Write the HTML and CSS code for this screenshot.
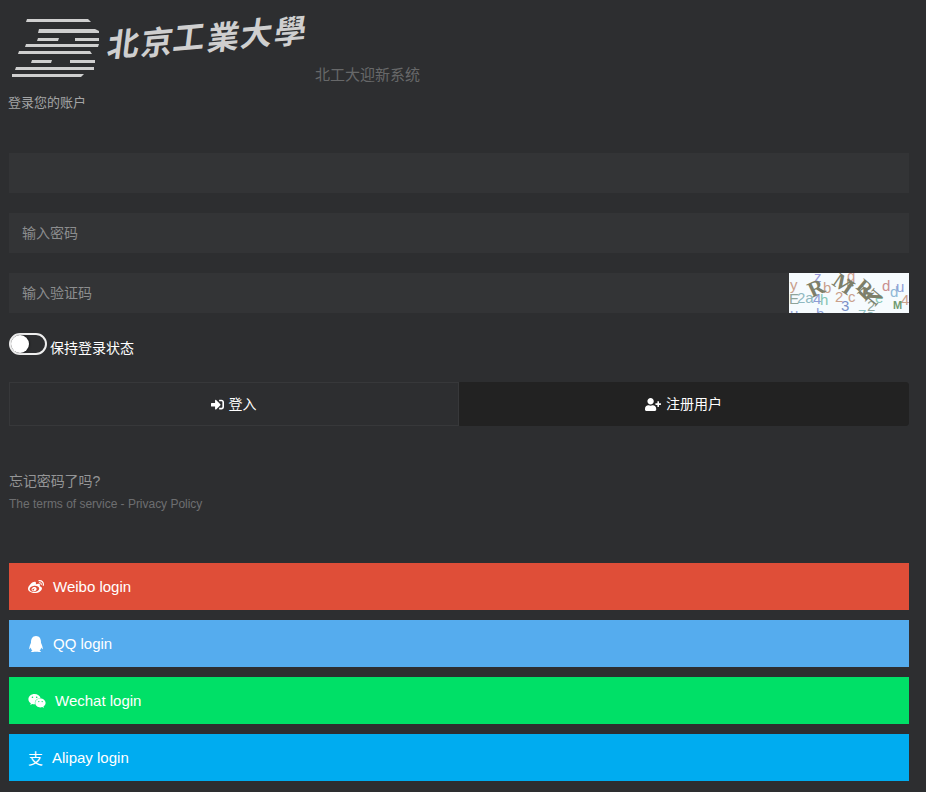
FILE: index.html
```html
<!DOCTYPE html>
<html lang="zh-CN">
<head>
<meta charset="utf-8">
<title>北工大迎新系统</title>
<link rel="stylesheet" href="styles.css">
</head>
<body>
<div class="wrap">
	<header class="top">
		<svg class="logo" viewBox="9 0 308 84" width="308" height="84">
			<g fill="#cfcfcf">
				<path d="M27 19h61l3 3H26z"/>
				<path d="M39 29h56l4 2v2H38z"/>
				<path d="M38 38h21l-1 3H37zM75 38h24v3H75z"/>
				<path d="M26 44h73l-1 3H25z"/>
				<path d="M19 51h71l2 3H18z"/>
				<path d="M32 60h20l-1 3H31zM70 60h25v3H70z"/>
				<path d="M16 67h78v3H15z"/>
				<path d="M12 74h72l-3 3H12z"/>
			</g>
			<g class="logo-text" transform="translate(5 -8) rotate(-5 207 40) skewX(-12)">
				<text x="111" y="56">北</text>
				<text x="145" y="57">京</text>
				<text x="177" y="55">工</text>
				<text x="212" y="58">業</text>
				<text x="245" y="57">大</text>
				<text x="279" y="58">學</text>
			</g>
		</svg>
		<span class="sys-name">北工大迎新系统</span>
	</header>
	<p class="hint">登录您的账户</p>

	<form class="login">
		<div class="field"><input type="text"></div>
		<div class="field"><input type="password" placeholder="输入密码"></div>
		<div class="field code">
			<input type="text" placeholder="输入验证码">
			<svg class="captcha" viewBox="0 0 120 40" width="120" height="40">
				<rect width="120" height="40" fill="#f6fbfe"/>
				<g font-family="Liberation Sans, sans-serif" font-size="15">
					<text x="1" y="17" fill="#c9a08c">y</text>
					<text x="0" y="31" fill="#8fa39a">E</text>
					<text x="8" y="30" fill="#8fb8c0">2a</text>
					<text x="24" y="31" fill="#8e9ed6">4</text>
					<text x="31" y="32" fill="#86c4b4">h</text>
					<text x="1" y="46" fill="#8e9ed6">u</text>
					<text x="27" y="46" fill="#8e9ed6">h</text>
					<text x="25" y="9" fill="#9a9ad8">z</text>
					<text x="58" y="8" fill="#cf9f90">q</text>
					<text x="34" y="20" fill="#c9a08c">b</text>
					<text x="46" y="29" fill="#c9a08c">2</text>
					<text x="52" y="38" fill="#7a90c8">3</text>
					<text x="59" y="29" fill="#c9a08c">c</text>
					<text x="86" y="30" fill="#86c4b4">e</text>
					<text x="78" y="38" fill="#8fa39a">2</text>
					<text x="93" y="18" fill="#c98f90">d</text>
					<text x="101" y="24" fill="#8fb8d6">d</text>
					<text x="107" y="19" fill="#8e9ed6">u</text>
					<text x="112" y="32" fill="#c9a08c">4</text>
					<text x="104" y="36" fill="#6f9a72" font-size="11" font-weight="bold">M</text>
					<text x="69" y="47" fill="#8fc0c0">7a</text>
				</g>
				<g font-family="Liberation Serif, serif" font-size="22" font-weight="bold" fill="#7d7f6a">
					<text transform="translate(23 25) rotate(-25)">R</text>
					<text transform="translate(42 11) rotate(35)">M</text>
					<text transform="translate(60 16) rotate(-35)" font-size="14">4</text>
					<text transform="translate(66 15) rotate(40)" font-size="20">R</text>
					<text transform="translate(76 29) rotate(-45)" font-size="18">R</text>
					<text transform="translate(86 34) rotate(-50)" font-size="20">N</text>
				</g>
			</svg>
		</div>

		<label class="keep">
			<span class="switch"><i></i></span>
			<span>保持登录状态</span>
		</label>

		<div class="btns">
			<button type="button" class="btn">
				<svg class="ico" viewBox="0 0 512 512"><path d="M416 448h-84c-6.6 0-12-5.4-12-12v-40c0-6.6 5.4-12 12-12h84c17.7 0 32-14.3 32-32V160c0-17.7-14.3-32-32-32h-84c-6.6 0-12-5.4-12-12V76c0-6.6 5.4-12 12-12h84c53 0 96 43 96 96v192c0 53-43 96-96 96zm-47-201L201 79c-15-15-41-4.5-41 17v96H24c-13.3 0-24 10.7-24 24v96c0 13.3 10.7 24 24 24h136v96c0 21.5 26 32 41 17l168-168c9.3-9.4 9.3-24.6 0-34z"/></svg>
				<span class="btn-txt">登入</span>
			</button>
			<button type="button" class="btn dark">
				<svg class="ico wide" viewBox="0 0 640 512"><path d="M624 208h-64v-64c0-8.8-7.2-16-16-16h-32c-8.8 0-16 7.2-16 16v64h-64c-8.8 0-16 7.2-16 16v32c0 8.8 7.2 16 16 16h64v64c0 8.8 7.2 16 16 16h32c8.8 0 16-7.2 16-16v-64h64c8.8 0 16-7.2 16-16v-32c0-8.8-7.2-16-16-16zm-400 48c70.7 0 128-57.3 128-128S294.7 0 224 0 96 57.3 96 128s57.3 128 128 128zm89.6 32h-16.7c-22.2 10.2-46.9 16-72.9 16s-50.6-5.8-72.9-16h-16.7C60.2 288 0 348.2 0 422.4V464c0 26.5 21.5 48 48 48h352c26.5 0 48-21.5 48-48v-41.6c0-74.2-60.2-134.4-134.4-134.4z"/></svg>
				<span class="btn-txt">注册用户</span>
			</button>
		</div>
	</form>

	<div class="extra">
		<a href="" class="forgot">忘记密码了吗?</a>
		<p class="terms">The terms of service - Privacy Policy</p>
	</div>

	<ul class="social">
		<li><a href="" class="weibo">
			<svg class="sico" viewBox="0 0 512 512"><path d="M407 177.6c7.6-24-13.4-46.8-37.4-41.7-22 4.8-28.8-28.1-7.1-32.8 50.1-10.9 92.3 37.1 76.5 84.8-6.8 21.2-38.8 10.8-32-10.3zM214.8 446.7C108.5 446.7 0 395.3 0 310.4c0-44.3 28-95.4 76.3-143.7C176 67 279.5 65.8 249.9 161c-4 13.1 12.3 5.7 12.3 6 79.5-33.6 140.5-16.8 114 51.4-3.7 9.4 1.1 10.9 8.3 13.1 135.7 42.3 34.8 215.2-169.7 215.2zm143.7-146.3c-5.4-55.7-78.5-94-163.4-85.7-84.8 8.6-148.8 60.3-143.4 116s78.5 94 163.4 85.7c84.8-8.6 148.8-60.3 143.4-116zM347.9 35.1c-25.9 5.6-16.8 43.7 8.3 38.3 72.3-15.2 134.8 52.8 111.7 124-7.4 24.2 29.1 37 37.4 12 31.9-99.8-55.1-195.9-157.4-174.3zm-78.5 311c-17.1 38.8-66.8 60-109.1 46.3-40.8-13.1-58-53.4-40.3-89.7 17.7-35.4 63.1-55.4 103.4-45.1 42 10.8 63.1 50.2 46 88.5zm-86.3-30c-12.9-5.4-30 .3-38 12.9-8.3 12.9-4.3 28 8.6 34 13.1 6 30.8.3 39.1-12.9 8-13.1 3.7-28.3-9.7-34zm32.6-13.4c-5.1-1.7-11.4.6-14.3 5.4-2.9 5-1.4 10.6 3.7 12.9 5.1 2 11.7-.3 14.6-5.4 2.8-5.2 1.1-10.9-4-12.9z"/></svg>
			Weibo login</a></li>
		<li><a href="" class="qq">
			<svg class="sico" viewBox="0 0 448 512"><path d="M433.754 420.445c-11.526 1.393-44.86-52.741-44.86-52.741 0 31.345-16.136 72.247-51.051 101.786 16.842 5.192 54.843 19.167 45.803 34.421-7.316 12.343-125.51 7.881-159.632 4.037-34.122 3.844-152.316 8.306-159.632-4.037-9.045-15.25 28.918-29.214 45.783-34.415-34.92-29.539-51.059-70.445-51.059-101.792 0 0-33.334 54.134-44.859 52.741-5.37-.65-12.424-29.644 9.347-99.704 10.261-33.024 21.995-60.478 40.144-105.779C60.683 98.063 108.982.006 224 0c113.737.006 163.156 96.133 160.264 214.963 18.118 45.223 29.912 72.85 40.144 105.778 21.768 70.06 14.716 99.053 9.346 99.704z"/></svg>
			QQ login</a></li>
		<li><a href="" class="wechat">
			<svg class="sico big" viewBox="0 0 576 512"><path d="M385.2 167.6c6.4 0 12.6.3 18.8 1.1C387.4 90.3 303.3 32 207.7 32 100.5 32 13 104.8 13 197.4c0 53.4 29.3 97.5 77.9 131.6l-19.3 58.6 68-34.1c24.4 4.8 43.8 9.7 68.2 9.7 6.2 0 12.1-.3 18.3-.8-4-12.9-6.2-26.6-6.2-40.8-.1-84.9 72.9-154 165.3-154zm-104.5-52.9c14.5 0 24.2 9.7 24.2 24.4 0 14.5-9.7 24.2-24.2 24.2-14.8 0-29.3-9.7-29.3-24.2.1-14.7 14.6-24.4 29.3-24.4zm-136.4 48.6c-14.5 0-29.3-9.7-29.3-24.2 0-14.8 14.8-24.4 29.3-24.4 14.8 0 24.4 9.7 24.4 24.4 0 14.6-9.6 24.2-24.4 24.2zM563 319.4c0-77.9-77.9-141.3-165.4-141.3-92.7 0-165.4 63.4-165.4 141.3S305 460.7 397.6 460.7c19.3 0 38.9-5.1 58.6-9.9l53.4 29.3-14.8-48.6C534 402.1 563 363.2 563 319.4zm-219.1-24.5c-9.7 0-19.3-9.7-19.3-19.6 0-9.7 9.7-19.3 19.3-19.3 14.8 0 24.4 9.7 24.4 19.3 0 10-9.7 19.6-24.4 19.6zm107.1 0c-9.7 0-19.3-9.7-19.3-19.6 0-9.7 9.7-19.3 19.3-19.3 14.5 0 24.4 9.7 24.4 19.3.1 10-9.9 19.6-24.4 19.6z"/></svg>
			Wechat login</a></li>
		<li><a href="" class="alipay"><span class="zhi">支</span>Alipay login</a></li>
	</ul>
</div>
</body>
</html>
```

FILE: styles.css
```css
* {margin:0; padding:0; box-sizing:border-box}
html, body {height:100%}
body {background-color:#2d2e30; font-family:"Liberation Sans", "Noto Sans CJK SC", sans-serif; color:#fff; overflow:hidden}
a {text-decoration:none}
li {list-style:none}

.wrap {padding:0 17px 0 9px}

.top {display:flex; align-items:flex-end; height:84px}
.logo {flex:none; margin-right:-1px}
.logo-text {font-family:"Noto Sans CJK TC", sans-serif; font-size:32px; font-weight:700; fill:#cfcfcf}
.sys-name {font-size:15px; line-height:18px; color:#676869; margin-left:-1px}
.hint {margin-top:11px; font-size:13px; line-height:16px; color:#a3a4a5; margin-left:-1px}

.login {margin-top:42px}
.field {display:flex; height:40px; margin-bottom:20px}
.field input {flex:1; min-width:0; border:0; outline:0; padding:0 13px; background-color:#333436; color:#ccc; font:14px "Liberation Sans", "Noto Sans CJK SC", sans-serif}
.field input::placeholder {color:#8c8d8e; opacity:1}
.captcha {flex:none; display:block}

.keep {display:flex; align-items:center; gap:3px; height:22px; font-size:14px; line-height:22px}
.keep span:last-child {padding-top:7px}
.switch {display:block; width:38px; height:22px; border:2px solid #eee; border-radius:11px}
.switch i {display:block; width:18px; height:18px; border-radius:50%; background-color:#fff; box-shadow:1px 0 2px rgba(0,0,0,.4)}

.btns {display:flex; margin-top:27px}
.btn {flex:1; display:flex; align-items:center; justify-content:center; gap:5px; height:44px; border:1px solid #37383a; background-color:#2d2e30; color:#fff; font:14px "Liberation Sans", "Noto Sans CJK SC", sans-serif}
.btn.dark {background-color:#222; border-color:#222; border-radius:0 3px 3px 0}
.btn-txt {position:relative; top:-1px}
.ico {width:13px; height:13px; fill:#fff; margin-left:-1px}
.ico.wide {width:16px}

.extra {margin-top:46px}
.forgot {display:block; font-size:14px; line-height:18px; color:#949596; letter-spacing:-.1px}
.terms {margin-top:6px; font-size:12px; line-height:16px; color:#6d6e70; letter-spacing:-.02px}

.social {margin-top:51px}
.social li {margin-bottom:10px}
.social a {display:flex; align-items:center; height:47px; padding-left:19px; font-size:15px; color:#fff}
.sico {width:16px; height:16px; fill:#fff; margin-right:9px}
.sico.big {width:18px; margin-right:9px}
.zhi {margin-right:9px; font-size:15px}
.weibo {background-color:#df4e38}
.qq {background-color:#55acee}
.wechat {background-color:#00e067}
.alipay {background-color:#00acf0}
```
